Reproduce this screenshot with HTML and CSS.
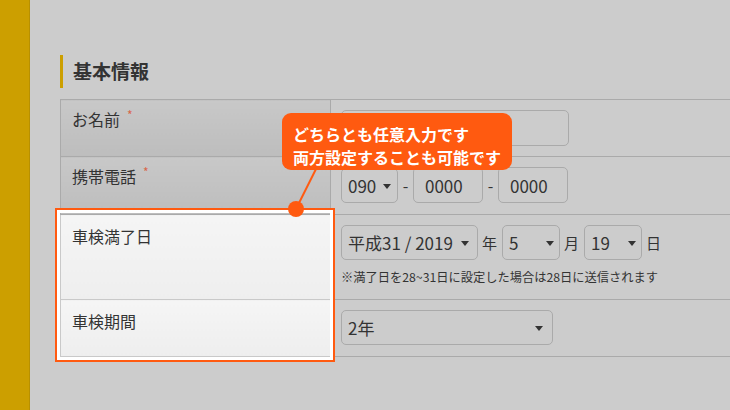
FILE: index.html
```html
<!DOCTYPE html>
<html lang="ja">
  <head>
    <meta charset="UTF-8" />
    <meta name="viewport" content="width=device-width, initial-scale=1.0" />
    <title>基本情報</title>
    <link rel="stylesheet" href="styles.css">
  </head>
  <body>
    <aside class="sidebar"></aside>

    <main class="main">
      <h2 class="section-title">基本情報</h2>

      <div class="form-area">
        <table class="form-table">
          <tr>
            <th>お名前<span class="required">*</span></th>
            <td><input type="text" class="text-input name-input" /></td>
          </tr>
          <tr>
            <th>携帯電話<span class="required">*</span></th>
            <td>
              <div class="inline-row">
                <span class="select w-tel">090</span>
                <span class="sep">-</span>
                <input type="text" class="text-input w-num" value="0000" />
                <span class="sep">-</span>
                <input type="text" class="text-input w-num" value="0000" />
              </div>
            </td>
          </tr>
          <tr>
            <th class="is-focus">車検満了日</th>
            <td>
              <div class="inline-row">
                <span class="select w-era">平成31 / 2019</span>
                <span class="unit">年</span>
                <span class="select w-day">5</span>
                <span class="unit">月</span>
                <span class="select w-day">19</span>
                <span class="unit">日</span>
              </div>
              <p class="note">※満了日を28~31日に設定した場合は28日に送信されます</p>
            </td>
          </tr>
          <tr>
            <th class="is-focus">車検期間</th>
            <td><span class="select w-term">2年</span></td>
          </tr>
        </table>

        <div class="focus-frame"></div>

        <svg class="pointer" width="100" height="150" viewBox="0 0 100 150">
          <line x1="90" y1="70" x2="70" y2="110" stroke="#ff5a10" stroke-width="2" />
          <circle cx="70" cy="110" r="8" fill="#ff5a10" />
        </svg>

        <div class="tooltip">
          どちらとも任意入力です<br />
          両方設定することも可能です
        </div>
      </div>
    </main>
  </body>
</html>
```

FILE: styles.css
```css
* {
  box-sizing: border-box;
}

body {
  margin: 0;
  font-family: "Noto Sans CJK JP", "Noto Sans", sans-serif;
  background-color: #cccccc;
  color: #333;
  display: flex;
  min-height: 410px;
  overflow: hidden;
}

.sidebar {
  width: 30px;
  flex-shrink: 0;
  background-color: #cc9f00;
  border-right: 1px solid #b89000;
}

.main {
  flex: 1;
  padding: 55px 0 0 30px;
}

.section-title {
  margin: 0 0 11px 0;
  height: 33px;
  line-height: 31px;
  border-left: 3px solid #cc9f00;
  padding-left: 10px;
  font-size: 19px;
  font-weight: 700;
  color: #333;
}

.form-area {
  position: relative;
}

.form-table {
  width: 100%;
  border-collapse: collapse;
}

.form-table th,
.form-table td {
  border-top: 1px solid #aaa;
  border-bottom: 1px solid #aaa;
  vertical-align: top;
}

.form-table th {
  width: 270px;
  text-align: left;
  font-weight: 400;
  font-size: 16px;
  line-height: 22px;
  padding: 8px 11px;
  border-left: 1px solid #aaa;
  border-right: 1px solid #aaa;
  background: linear-gradient(#c8c8c8, #bdbdbd);
}

.form-table th.is-focus {
  background: linear-gradient(#f5f5f5, #eeeeee);
  border-color: #c9c9c9;
  padding-top: 10px;
}

.form-table tr:nth-child(1) th,
.form-table tr:nth-child(1) td {
  height: 56px;
}
.form-table tr:nth-child(2) th,
.form-table tr:nth-child(2) td {
  height: 58px;
}
.form-table tr:nth-child(3) th,
.form-table tr:nth-child(3) td {
  height: 85px;
}
.form-table tr:nth-child(4) th,
.form-table tr:nth-child(4) td {
  height: 57px;
}

.form-table td {
  padding: 10px 10px;
}

.required {
  color: #d9654a;
  font-size: 12px;
  vertical-align: top;
  margin-left: 7px;
  line-height: 14px;
}

.inline-row {
  display: flex;
  align-items: center;
}

.text-input {
  height: 36px;
  border: 1px solid #aaa;
  border-radius: 5px;
  background-color: #cccccc;
  font-family: inherit;
  font-size: 17px;
  color: #333;
  padding: 0 11px;
  outline: none;
}

.name-input {
  width: 228px;
}

.w-num {
  width: 70px;
}

.select {
  position: relative;
  display: inline-block;
  height: 35px;
  line-height: 33px;
  border: 1px solid #aaa;
  border-radius: 5px;
  padding: 0 6px;
  font-size: 17px;
  color: #333;
  vertical-align: top;
}

.select::after {
  content: "";
  position: absolute;
  right: 8px;
  top: 15px;
  border-left: 4px solid transparent;
  border-right: 4px solid transparent;
  border-top: 5px solid #333;
}

.w-tel {
  width: 57px;
}
.w-tel::after {
  right: 6px;
}
.w-era {
  width: 137px;
}
.w-day {
  width: 58px;
}
.w-day::after {
  right: 5px;
}
.w-term {
  width: 212px;
}
.w-term::after {
  right: 9px;
}

.sep {
  width: 15px;
  text-align: center;
  font-size: 16px;
}

.unit {
  width: 23px;
  text-align: center;
  font-size: 15px;
}
.unit + .select {
  margin-left: 1px;
}

.note {
  margin: 9px 0 0 0;
  font-size: 12.25px;
  line-height: 16px;
  color: #333;
}

.focus-frame {
  position: absolute;
  left: -5px;
  top: 109px;
  width: 280px;
  height: 154px;
  border: 2px solid #ff5a10;
  box-shadow: inset 0 0 0 3px #fff;
  pointer-events: none;
}

.pointer {
  position: absolute;
  left: 166px;
  top: 0px;
}

.tooltip {
  position: absolute;
  left: 222px;
  top: 14px;
  width: 230px;
  height: 57px;
  padding: 10px 11px;
  background-color: #ff5a10;
  border-radius: 9px;
  color: #fff;
  font-size: 16px;
  font-weight: 700;
  line-height: 23px;
  white-space: nowrap;
}
```
